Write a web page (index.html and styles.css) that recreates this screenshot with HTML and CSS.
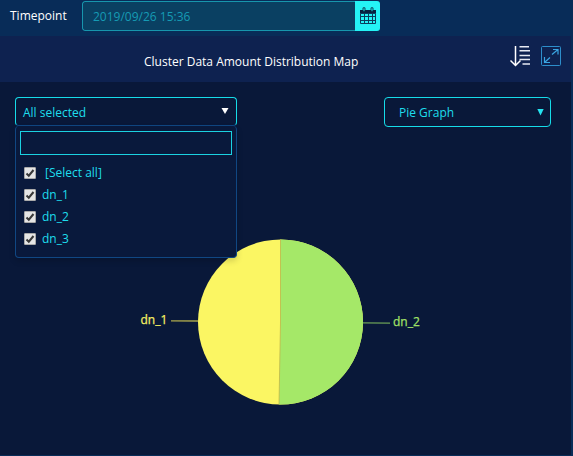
FILE: index.html
```html
<!DOCTYPE html>
<html lang="en">
<head>
<meta charset="utf-8">
<title>Cluster Data Amount Distribution Map</title>
<link rel="stylesheet" href="styles.css">
</head>
<body>
<div class="toolbar">
  <span class="toolbar-label">Timepoint</span>
  <div class="date-field">
    <span class="date-value">2019/09/26 15:36</span>
    <span class="date-button">
      <svg width="17" height="18" viewBox="0 0 17 18">
        <path d="M0 3h16v3.500H0z" fill="#08203f"/>
        <path d="M.5 6.500h15v10H.5zM.5 9.500h15M.5 13.500h15M4.500 7v9M8.500 7v9M12.500 7v9" fill="none" stroke="#0b3d5c"/>
        <path d="M3 .8h2v3.400H3zM11 .8h2v3.400h-2z" fill="#25f3f5" stroke="#08243f" stroke-width=".8"/>
      </svg>
    </span>
  </div>
</div>
<section class="panel">
  <header class="panel-header">
    <h1 class="panel-title">Cluster Data Amount Distribution Map</h1>
    <svg class="sort-icon" width="21" height="22" viewBox="0 0 21 22">
      <path d="M5.500 0v19M.5 14.500l5 5 5-5" fill="none" stroke="#fff" stroke-width="1.500"/>
      <path d="M9.500 .8H19M9.500 4.700H20M9.500 9.500H20M9.500 13.500H20M12.500 18H20" fill="none" stroke="#e6eaf3" stroke-width="1.500"/>
    </svg>
    <svg class="expand-icon" width="20" height="20" viewBox="0 0 20 20">
      <rect x=".5" y=".5" width="19" height="19" rx="1" fill="none" stroke="#2d8ecb"/>
      <path d="M11 8.500l6-5M12 3.500h5v5M9 11.500l-5.500 5M3.500 11v5.500H9" fill="none" stroke="#3aa5e2" stroke-width="1.200"/>
    </svg>
  </header>
  <div class="panel-body">
    <div class="controls">
      <div class="node-select">
        <div class="select-box">
          <span>All selected</span>
          <svg class="caret" width="8" height="6" viewBox="0 0 8 6"><path d="M.5 0h7L4 6z" fill="#fff"/></svg>
        </div>
        <div class="dropdown">
          <div class="search"></div>
          <div class="option option-all"><span class="check"><svg width="10" height="10" viewBox="0 0 10 10"><path d="M1.500 5.500l2.300 2.200L8.500 2" fill="none" stroke="#383838" stroke-width="2"/></svg></span>[Select all]</div>
          <div class="option"><span class="check"><svg width="10" height="10" viewBox="0 0 10 10"><path d="M1.500 5.500l2.300 2.200L8.500 2" fill="none" stroke="#383838" stroke-width="2"/></svg></span>dn_1</div>
          <div class="option"><span class="check"><svg width="10" height="10" viewBox="0 0 10 10"><path d="M1.500 5.500l2.300 2.200L8.500 2" fill="none" stroke="#383838" stroke-width="2"/></svg></span>dn_2</div>
          <div class="option"><span class="check"><svg width="10" height="10" viewBox="0 0 10 10"><path d="M1.500 5.500l2.300 2.200L8.500 2" fill="none" stroke="#383838" stroke-width="2"/></svg></span>dn_3</div>
        </div>
      </div>
      <div class="graph-select">
        <span>Pie Graph</span>
        <svg class="caret" width="7" height="7" viewBox="0 0 7 7"><path d="M.3 0h6.400L3.500 6.500z" fill="#25e4f0"/></svg>
      </div>
    </div>
    <svg class="chart" width="571" height="327" viewBox="0 0 571 327">
      <circle cx="280.500" cy="195" r="82.500" fill="#fbf663"/>
      <path d="M280.500 195V112.500A82.500 82.500 0 1 1 279 277.486z" fill="#a5e868"/>
      <path d="M280.500 112.500V195L279 277.486" fill="none" stroke="#bfb64b" stroke-width=".8"/>
      <path d="M171 193.800L198 194" stroke="#aaa64d" stroke-width="1.300"/>
      <path d="M363 195.900L390 196.200" stroke="#6ba057" stroke-width="1.300"/>
      <text class="slice-label" x="140.500" y="197" fill="#f4ef62" stroke="#f4ef62">dn_1</text>
      <text class="slice-label" x="393" y="199" fill="#a0e066" stroke="#a0e066">dn_2</text>
    </svg>
  </div>
</section>
</body>
</html>
```

FILE: styles.css
```css
* { box-sizing: border-box; }
body {
  margin: 0;
  width: 573px;
  height: 456px;
  overflow: hidden;
  background: #082c58;
  color: #fff;
  font: 12px/18px "Open Sans", "Noto Sans", sans-serif;
}
.toolbar {
  display: flex;
  height: 36px;
  padding: 1px 0 0 10px;
}
.toolbar-label { width: 72px; padding-top: 6px; }
.date-field {
  display: flex;
  width: 298px;
  height: 30px;
  border-radius: 3px;
  overflow: hidden;
}
.date-value {
  flex: 1;
  padding: 6px 0 0 10px;
  border: 1px solid #1796ad;
  border-right: 0;
  border-radius: 3px 0 0 3px;
  background: #0a4062;
  color: #169bb4;
}
.date-button { width: 25px; padding: 6px 0 0 5px; background: #25f3f5; }
svg { display: block; }
.panel { width: 571px; height: 419px; background: #091839; }
.panel-header {
  display: flex;
  height: 46px;
  background: #0e2250;
}
.panel-title {
  width: 366px;
  margin: 0 0 0 144px;
  padding-top: 17px;
  font-size: 12px;
  font-weight: 400;
  white-space: nowrap;
}
.sort-icon { margin-top: 10px; }
.expand-icon { margin: 10px 0 0 10px; }
.panel-body { display: grid; grid-template-columns: 571px; height: 373px; }
.controls, .chart { grid-area: 1 / 1; }
.chart { margin-top: 45px; }
.controls {
  display: flex;
  justify-content: space-between;
  align-items: flex-start;
  z-index: 1;
  padding: 15px 20px 0 15px;
  color: #1edeed;
}
.node-select { width: 222px; }
.select-box, .graph-select {
  display: flex;
  justify-content: space-between;
  height: 30px;
  border: 1px solid #16dce9;
  border-radius: 4px;
  padding: 6px 7px 0;
}
.select-box { height: 29px; border-bottom-color: #104783; }
.select-box .caret { margin-top: 4px; }
.graph-select { width: 167px; padding: 6px 6px 0 14px; }
.graph-select .caret { margin-top: 5px; }
.dropdown {
  height: 132px;
  padding: 5px 4px 0;
  border: 1px solid #104783;
  border-top: 0;
  border-radius: 4px;
  background: #09193c;
  box-shadow: 0 3px 6px rgba(0, 0, 0, .16);
}
.search { height: 24px; margin-bottom: 7px; border: 1px solid #1bd2e2; }
.option { display: flex; align-items: center; gap: 6px; height: 22px; padding-left: 4px; }
.option-all { gap: 9px; }
.check {
  width: 12px;
  height: 12px;
  border: 1px solid #aaa;
  border-radius: 1px;
  background: #e5e5e5;
}
.slice-label { font: 12px "Open Sans", "Noto Sans", sans-serif; stroke-width: .25px; }
```
